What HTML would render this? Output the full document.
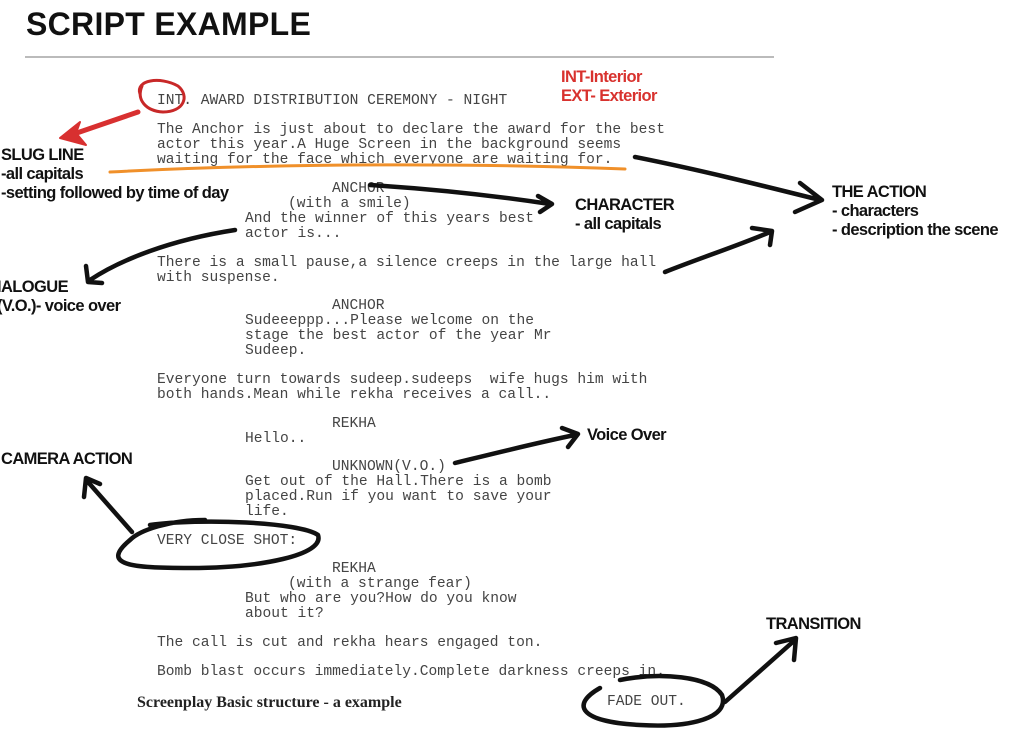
<!DOCTYPE html>
<html><head><style>
body{margin:0;background:#fff;width:1022px;height:740px;position:relative;overflow:hidden;font-family:"Liberation Sans",sans-serif}
.m{position:absolute;font-family:"Liberation Mono",monospace;font-size:14.6px;color:#444;white-space:pre;line-height:15px}
.l{position:absolute;font-weight:bold;font-size:16.5px;color:#111;white-space:pre;line-height:19px;letter-spacing:-0.6px}
</style></head><body>
<div style="position:absolute;left:26px;top:6px;font-size:32px;font-weight:bold;color:#111;letter-spacing:0.3px">SCRIPT EXAMPLE</div>
<div style="position:absolute;left:25px;top:56px;width:749px;height:2px;background:#bbb"></div>

<div class="m" style="left:157px;top:94px">INT. AWARD DISTRIBUTION CEREMONY - NIGHT</div>
<div class="m" style="left:157px;top:123px">The Anchor is just about to declare the award for the best
actor this year.A Huge Screen in the background seems
waiting for the face which everyone are waiting for.</div>
<div class="m" style="left:332px;top:182px">ANCHOR</div>
<div class="m" style="left:288px;top:197px">(with a smile)</div>
<div class="m" style="left:245px;top:212px">And the winner of this years best
actor is...</div>
<div class="m" style="left:157px;top:256px">There is a small pause,a silence creeps in the large hall
with suspense.</div>
<div class="m" style="left:332px;top:299px">ANCHOR</div>
<div class="m" style="left:245px;top:314px">Sudeeeppp...Please welcome on the
stage the best actor of the year Mr
Sudeep.</div>
<div class="m" style="left:157px;top:373px">Everyone turn towards sudeep.sudeeps  wife hugs him with
both hands.Mean while rekha receives a call..</div>
<div class="m" style="left:332px;top:417px">REKHA</div>
<div class="m" style="left:245px;top:432px">Hello..</div>
<div class="m" style="left:332px;top:460px">UNKNOWN(V.O.)</div>
<div class="m" style="left:245px;top:475px">Get out of the Hall.There is a bomb
placed.Run if you want to save your
life.</div>
<div class="m" style="left:157px;top:534px">VERY CLOSE SHOT:</div>
<div class="m" style="left:332px;top:562px">REKHA</div>
<div class="m" style="left:288px;top:577px">(with a strange fear)</div>
<div class="m" style="left:245px;top:592px">But who are you?How do you know
about it?</div>
<div class="m" style="left:157px;top:636px">The call is cut and rekha hears engaged ton.</div>
<div class="m" style="left:157px;top:665px">Bomb blast occurs immediately.Complete darkness creeps in.</div>
<div class="m" style="left:607px;top:695px">FADE OUT.</div>
<div style="position:absolute;left:137px;top:694px;font-family:'Liberation Serif',serif;font-weight:bold;font-size:16px;color:#222">Screenplay Basic structure - a example</div>

<div class="l" style="left:561px;top:68px;color:#d8322e">INT-Interior
EXT- Exterior</div>
<div class="l" style="left:1px;top:146px">SLUG LINE
-all capitals
-setting followed by time of day</div>
<div class="l" style="left:575px;top:196px">CHARACTER
- all capitals</div>
<div class="l" style="left:832px;top:183px">THE ACTION
- characters
- description the scene</div>
<div class="l" style="left:-3px;top:278px">IALOGUE
(V.O.)- voice over</div>
<div class="l" style="left:587px;top:426px">Voice Over</div>
<div class="l" style="left:1px;top:450px">CAMERA ACTION</div>
<div class="l" style="left:766px;top:615px">TRANSITION</div>

<svg width="1022" height="740" style="position:absolute;left:0;top:0" fill="none" stroke-linecap="round" stroke-linejoin="round">
<path d="M140 94 C135 80 160 76 178 86 C190 96 184 112 163 112 C146 111 136 100 142 86" stroke="#c82828" stroke-width="3"/>
<path d="M138 112 L68 136" stroke="#d83030" stroke-width="5"/>
<path d="M60 138 L80 122 L76 133 L86 145 Z" fill="#d83030" stroke="#d83030" stroke-width="2"/>
<path d="M110 172 C300 162 500 164 625 169" stroke="#f0902a" stroke-width="3"/>
<path d="M370 185 C450 190 510 198 550 204 M538 196 L552 204 L540 212" stroke="#111" stroke-width="4.5"/>
<path d="M635 157 C700 170 760 185 820 200 M800 183 L822 200 L795 212" stroke="#111" stroke-width="4.5"/>
<path d="M665 272 C700 258 740 245 770 232 M752 228 L772 231 L770 245" stroke="#111" stroke-width="4.5"/>
<path d="M235 230 C170 240 120 260 90 280 M86 266 L88 282 L102 283" stroke="#111" stroke-width="4.5"/>
<path d="M455 463 C500 452 540 442 575 435 M562 428 L578 434 L568 447" stroke="#111" stroke-width="4.5"/>
<path d="M132 532 L88 482 M84 497 L86 478 L100 484" stroke="#111" stroke-width="4.5"/>
<path d="M150 525 C200 518 300 522 318 535 C325 555 260 568 190 568 C130 568 100 565 130 540 C140 530 170 520 205 520" stroke="#111" stroke-width="4.5"/>
<path d="M620 680 C660 672 710 676 722 695 C730 718 690 728 640 725 C580 722 570 705 600 688" stroke="#111" stroke-width="4.5"/>
<path d="M725 702 L795 640 M776 643 L796 638 L794 660" stroke="#111" stroke-width="4.5"/>
</svg>
</body></html>
